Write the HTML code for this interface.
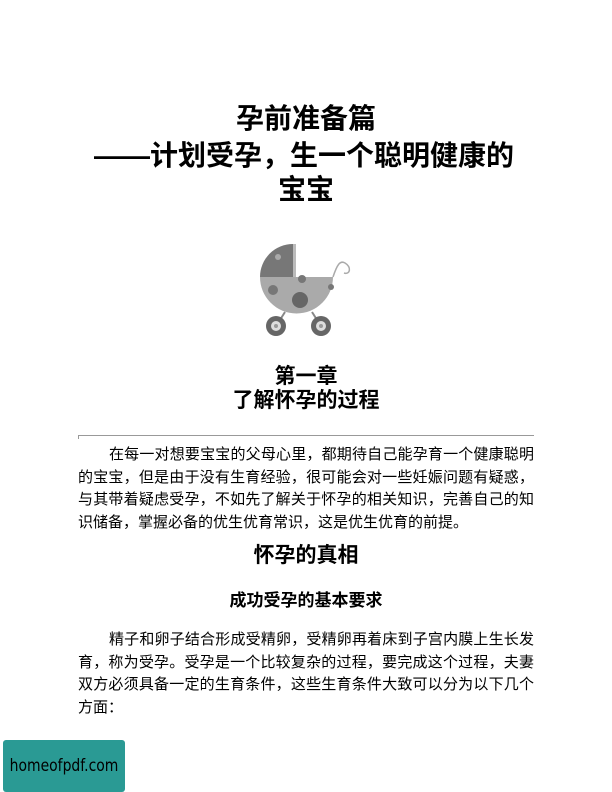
<!DOCTYPE html>
<html><head><meta charset="utf-8"><style>
body{margin:0;width:612px;height:792px;background:#fff;position:relative;overflow:hidden;font-family:"Liberation Sans","Noto Sans CJK SC",sans-serif;color:#000}
.c{position:absolute;left:0;width:612px;text-align:center;font-weight:bold}
.t{font-size:28px;line-height:34px}
.h{font-size:21px;line-height:24px}
.p{position:absolute;left:78px;width:456px;font-size:15px}
.p div{height:22.5px;line-height:22.5px;text-align:justify;text-align-last:justify;white-space:nowrap}
.p div.l{text-align-last:left}
.p div.i{padding-left:31px}
</style></head><body>
<div class="c t" style="top:102px">孕前准备篇</div>
<div class="c t" style="top:139px;left:-2px">——计划受孕，生一个聪明健康的</div>
<div class="c t" style="top:173px">宝宝</div>
<svg style="position:absolute;left:240px;top:235px" width="130" height="110">
<path d="M53 42 L53 9 A33 33 0 0 0 20 42 Z" fill="#777"/>
<rect x="53" y="9" width="3" height="33" fill="#bbb"/>
<circle cx="38" cy="22" r="3" fill="#aaa"/>
<path d="M20 42 L93 42 A36.5 36.5 0 0 1 20 42 Z" fill="#aaa"/>
<circle cx="33" cy="55" r="5" fill="#777"/><circle cx="60" cy="65" r="8" fill="#666"/><circle cx="62" cy="44" r="4" fill="#777"/><circle cx="91" cy="52" r="3" fill="#777"/>
<path d="M93 42 C97 30 100 25 105 28 C112 32 110 40 104 38" fill="none" stroke="#aaa" stroke-width="1.5"/>
<line x1="45" y1="77" x2="38" y2="88" stroke="#888" stroke-width="2"/><line x1="72" y1="77" x2="79" y2="88" stroke="#888" stroke-width="2"/>
<circle cx="36" cy="91" r="10" fill="#666"/><circle cx="36" cy="91" r="5" fill="#ddd"/><circle cx="36" cy="91" r="2" fill="#999"/>
<circle cx="81" cy="91" r="10" fill="#666"/><circle cx="81" cy="91" r="5" fill="#ddd"/><circle cx="81" cy="91" r="2" fill="#999"/>
</svg>
<div class="c h" style="top:365px">第一章</div>
<div class="c h" style="top:389px">了解怀孕的过程</div>
<div style="position:absolute;left:78px;top:435px;width:456px;height:1px;background:#999"></div>
<div style="position:absolute;left:78px;top:435px;width:1px;height:4px;background:#999"></div>
<div class="p" style="top:444px">
<div class="i">在每一对想要宝宝的父母心里，都期待自己能孕育一个健康聪明</div>
<div>的宝宝，但是由于没有生育经验，很可能会对一些妊娠问题有疑惑，</div>
<div>与其带着疑虑受孕，不如先了解关于怀孕的相关知识，完善自己的知</div>
<div class="l">识储备，掌握必备的优生优育常识，这是优生优育的前提。</div>
</div>
<div class="c h" style="top:544px">怀孕的真相</div>
<div class="c" style="top:591px;font-size:17px;line-height:20px">成功受孕的基本要求</div>
<div class="p" style="top:629px">
<div class="i">精子和卵子结合形成受精卵，受精卵再着床到子宫内膜上生长发</div>
<div>育，称为受孕。受孕是一个比较复杂的过程，要完成这个过程，夫妻</div>
<div>双方必须具备一定的生育条件，这些生育条件大致可以分为以下几个</div>
<div class="l">方面：</div>
</div>
<div style="position:absolute;left:3px;top:740px;width:122px;height:52px;background:#2a9a94;border-radius:3px;overflow:hidden"><div style="font-family:'DejaVu Sans',sans-serif;font-size:17px;line-height:52px;text-align:center;color:#000;transform:scaleX(0.82);width:150px;margin-left:-14px;white-space:nowrap">homeofpdf.com</div></div>
</body></html>
